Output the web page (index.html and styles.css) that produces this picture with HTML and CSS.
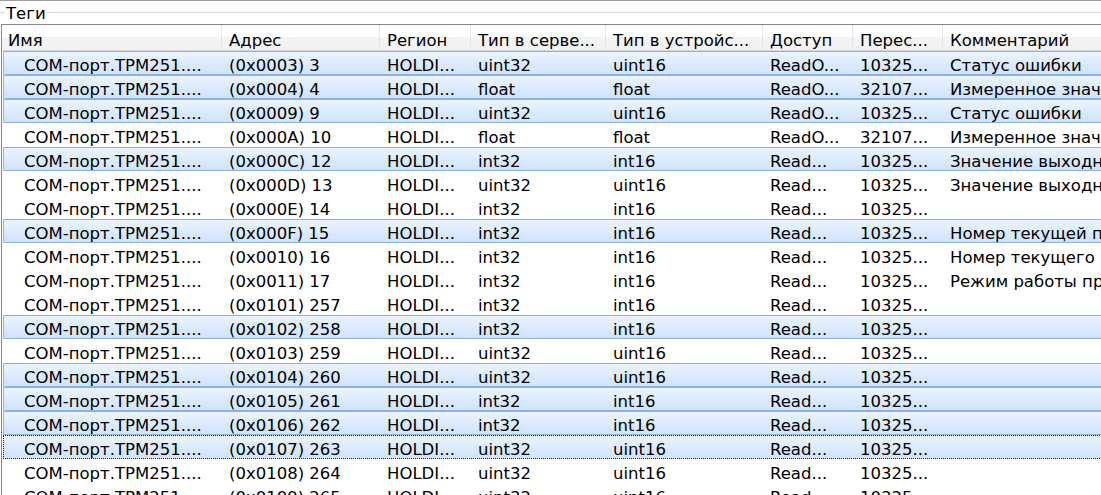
FILE: index.html
```html
<!DOCTYPE html>
<html lang="ru">
<head>
<meta charset="UTF-8">
<title>Теги</title>
<link rel="stylesheet" href="styles.css">
</head>
<body>
  <div class="topline"></div>
  <div class="legend">
    <span class="edge"></span>
    <span class="legend-text">Теги</span>
    <span class="rule"></span>
  </div>
  <div class="list">
    <div class="header">
      <div class="c1">Имя</div>
      <div class="c2">Адрес</div>
      <div class="c3">Регион</div>
      <div class="c4">Тип в серве...</div>
      <div class="c5">Тип в устройс...</div>
      <div class="c6">Доступ</div>
      <div class="c7">Перес...</div>
      <div class="c8">Комментарий</div>
    </div>

    <div class="row sel">
      <div class="c1">COM-порт.TPM251....</div><div class="c2">(0x0003) 3</div><div class="c3">HOLDI...</div><div class="c4">uint32</div><div class="c5">uint16</div><div class="c6">ReadO...</div><div class="c7">10325...</div><div class="c8">Статус ошибки</div>
    </div>
    <div class="row sel">
      <div class="c1">COM-порт.TPM251....</div><div class="c2">(0x0004) 4</div><div class="c3">HOLDI...</div><div class="c4">float</div><div class="c5">float</div><div class="c6">ReadO...</div><div class="c7">32107...</div><div class="c8">Измеренное знач</div>
    </div>
    <div class="row sel">
      <div class="c1">COM-порт.TPM251....</div><div class="c2">(0x0009) 9</div><div class="c3">HOLDI...</div><div class="c4">uint32</div><div class="c5">uint16</div><div class="c6">ReadO...</div><div class="c7">10325...</div><div class="c8">Статус ошибки</div>
    </div>
    <div class="row">
      <div class="c1">COM-порт.TPM251....</div><div class="c2">(0x000A) 10</div><div class="c3">HOLDI...</div><div class="c4">float</div><div class="c5">float</div><div class="c6">ReadO...</div><div class="c7">32107...</div><div class="c8">Измеренное знач</div>
    </div>
    <div class="row sel">
      <div class="c1">COM-порт.TPM251....</div><div class="c2">(0x000C) 12</div><div class="c3">HOLDI...</div><div class="c4">int32</div><div class="c5">int16</div><div class="c6">Read...</div><div class="c7">10325...</div><div class="c8">Значение выходн</div>
    </div>
    <div class="row">
      <div class="c1">COM-порт.TPM251....</div><div class="c2">(0x000D) 13</div><div class="c3">HOLDI...</div><div class="c4">uint32</div><div class="c5">uint16</div><div class="c6">Read...</div><div class="c7">10325...</div><div class="c8">Значение выходн</div>
    </div>
    <div class="row">
      <div class="c1">COM-порт.TPM251....</div><div class="c2">(0x000E) 14</div><div class="c3">HOLDI...</div><div class="c4">int32</div><div class="c5">int16</div><div class="c6">Read...</div><div class="c7">10325...</div><div class="c8"></div>
    </div>
    <div class="row sel">
      <div class="c1">COM-порт.TPM251....</div><div class="c2">(0x000F) 15</div><div class="c3">HOLDI...</div><div class="c4">int32</div><div class="c5">int16</div><div class="c6">Read...</div><div class="c7">10325...</div><div class="c8">Номер текущей п</div>
    </div>
    <div class="row">
      <div class="c1">COM-порт.TPM251....</div><div class="c2">(0x0010) 16</div><div class="c3">HOLDI...</div><div class="c4">int32</div><div class="c5">int16</div><div class="c6">Read...</div><div class="c7">10325...</div><div class="c8">Номер текущего</div>
    </div>
    <div class="row">
      <div class="c1">COM-порт.TPM251....</div><div class="c2">(0x0011) 17</div><div class="c3">HOLDI...</div><div class="c4">int32</div><div class="c5">int16</div><div class="c6">Read...</div><div class="c7">10325...</div><div class="c8">Режим работы пр</div>
    </div>
    <div class="row">
      <div class="c1">COM-порт.TPM251....</div><div class="c2">(0x0101) 257</div><div class="c3">HOLDI...</div><div class="c4">int32</div><div class="c5">int16</div><div class="c6">Read...</div><div class="c7">10325...</div><div class="c8"></div>
    </div>
    <div class="row sel">
      <div class="c1">COM-порт.TPM251....</div><div class="c2">(0x0102) 258</div><div class="c3">HOLDI...</div><div class="c4">int32</div><div class="c5">int16</div><div class="c6">Read...</div><div class="c7">10325...</div><div class="c8"></div>
    </div>
    <div class="row">
      <div class="c1">COM-порт.TPM251....</div><div class="c2">(0x0103) 259</div><div class="c3">HOLDI...</div><div class="c4">uint32</div><div class="c5">uint16</div><div class="c6">Read...</div><div class="c7">10325...</div><div class="c8"></div>
    </div>
    <div class="row sel">
      <div class="c1">COM-порт.TPM251....</div><div class="c2">(0x0104) 260</div><div class="c3">HOLDI...</div><div class="c4">uint32</div><div class="c5">uint16</div><div class="c6">Read...</div><div class="c7">10325...</div><div class="c8"></div>
    </div>
    <div class="row sel">
      <div class="c1">COM-порт.TPM251....</div><div class="c2">(0x0105) 261</div><div class="c3">HOLDI...</div><div class="c4">int32</div><div class="c5">int16</div><div class="c6">Read...</div><div class="c7">10325...</div><div class="c8"></div>
    </div>
    <div class="row sel">
      <div class="c1">COM-порт.TPM251....</div><div class="c2">(0x0106) 262</div><div class="c3">HOLDI...</div><div class="c4">int32</div><div class="c5">int16</div><div class="c6">Read...</div><div class="c7">10325...</div><div class="c8"></div>
    </div>
    <div class="row sel focus">
      <div class="c1">COM-порт.TPM251....</div><div class="c2">(0x0107) 263</div><div class="c3">HOLDI...</div><div class="c4">uint32</div><div class="c5">uint16</div><div class="c6">Read...</div><div class="c7">10325...</div><div class="c8"></div>
    </div>
    <div class="row">
      <div class="c1">COM-порт.TPM251....</div><div class="c2">(0x0108) 264</div><div class="c3">HOLDI...</div><div class="c4">uint32</div><div class="c5">uint16</div><div class="c6">Read...</div><div class="c7">10325...</div><div class="c8"></div>
    </div>
    <div class="row">
      <div class="c1">COM-порт.TPM251....</div><div class="c2">(0x0109) 265</div><div class="c3">HOLDI...</div><div class="c4">uint32</div><div class="c5">uint16</div><div class="c6">Read...</div><div class="c7">10325...</div><div class="c8"></div>
    </div>
  </div>
</body>
</html>
```

FILE: styles.css
```css
body {
  margin: 0;
  width: 1101px;
  height: 495px;
  overflow: hidden;
  background: #fff;
  font-family: "DejaVu Sans", Verdana, sans-serif;
  font-size: 16.5px;
  color: #000;
}

/* window edge */
.topline {
  height: 1px;
  background: #a0a0a0;
}

/* group box caption */
.legend {
  display: flex;
  align-items: center;
  height: 23px;
}

.legend .edge {
  width: 5px;
  height: 1px;
  background: #d5dfe5;
}

.legend .rule {
  flex: 1;
  height: 1px;
  background: #d5dfe5;
}

.legend-text {
  padding: 2px 1px 0;
  line-height: 21px;
}

/* list view */
.list {
  width: 1101px;
  box-sizing: border-box;
  margin-left: 1px;
  border-top: 1px solid #828790;
  border-left: 1px solid #828790;
  height: 471px;
  overflow: hidden;
}

.header {
  display: flex;
  height: 26px;
  box-sizing: border-box;
  border-bottom: 1px solid #d5d5d5;
  background: linear-gradient(#fff 0%, #fff 45%, #f3f4f6 50%, #f1f2f4 100%);
}

.header div {
  box-sizing: border-box;
  flex-shrink: 0;
  padding: 6px 0 0 7px;
  line-height: 19px;
  border-right: 1px solid #e3e6ea;
  white-space: nowrap;
}

.header .c1 {
  width: 220px;
  padding-left: 6px;
}

.header .c8 {
  flex: 1;
  border-right: none;
}

.row {
  display: flex;
  height: 24px;
  box-sizing: border-box;
  margin-left: 1px;
  border: 1px solid transparent;
  border-right: none;
  border-radius: 2px 0 0 2px;
}

.row div {
  box-sizing: border-box;
  flex-shrink: 0;
  padding: 5px 0 0 7px;
  line-height: 17px;
  white-space: nowrap;
}

.row .c1 {
  width: 218px;
  padding-left: 20px;
}

.c2 { width: 158px; }
.c3 { width: 91px; }
.c4 { width: 135px; }
.c5 { width: 157px; }
.c6 { width: 90px; }
.c7 { width: 90px; }
.row .c8 { flex: 1; }

/* selected rows */
.row.sel {
  border-color: #8db2e3;
  background: linear-gradient(#ebf4fe, #cfe3fc);
}

.row.focus {
  border: 1px dotted #1a1a1a;
  border-right: none;
  border-radius: 0;
}
```
